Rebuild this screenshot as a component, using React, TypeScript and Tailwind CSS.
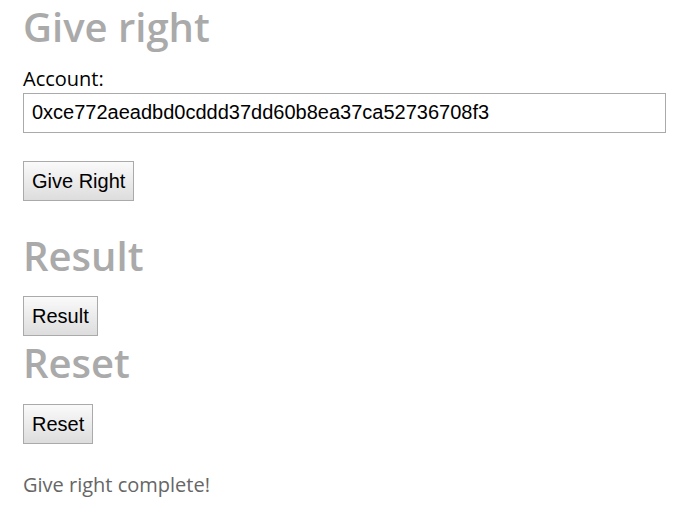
export default function App() {
  return (
    <div className="min-h-screen bg-white px-[23px] font-['Open_Sans',sans-serif]">
      <h2 className="text-[40px] font-semibold leading-[1.36] text-[#aaaaaa]">Give right</h2>
      <label className="mt-[11px] block text-[20px] leading-[1.36] text-black">Account:</label>
      <input
        className="block h-[40px] w-[643px] border border-[#aaaaaa] px-[8px] font-['Liberation_Sans',Arial,sans-serif] text-[20px] text-black outline-none"
        defaultValue="0xce772aeadbd0cddd37dd60b8ea37ca52736708f3"
      />
      <Btn className="mt-[28px]">Give Right</Btn>

      <h2 className="mt-[28px] text-[40px] font-semibold leading-[1.36] text-[#aaaaaa]">Result</h2>
      <Btn className="mt-[13px]">Result</Btn>
      <h2 className="text-[40px] font-semibold leading-[1.36] text-[#aaaaaa]">Reset</h2>
      <Btn className="mt-[14px]">Reset</Btn>

      <p className="mt-[27px] text-[20px] leading-[1.36] text-[#666666]">Give right complete!</p>
    </div>
  )
}

function Btn({ children, className = '' }: { children: string; className?: string }) {
  return (
    <button
      className={
        'block h-[40px] border border-[#aaaaaa] bg-gradient-to-b from-[#fafafa] to-[#dddddd] px-[8px] font-[\'Liberation_Sans\',Arial,sans-serif] text-[20px] text-black ' +
        className
      }
    >
      {children}
    </button>
  )
}
